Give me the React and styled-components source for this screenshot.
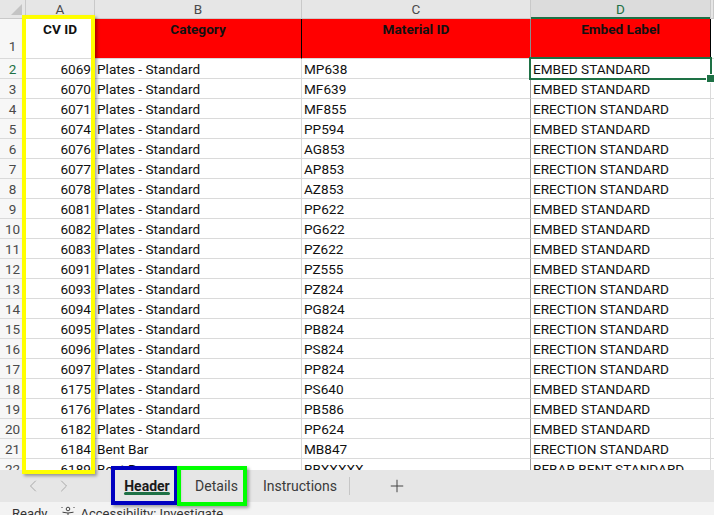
import React from 'react';
import styled, { createGlobalStyle, css } from 'styled-components';
import { ChevronLeft, ChevronRight, Plus } from 'lucide-react';

const GlobalStyle = createGlobalStyle`
  html, body { margin: 0; padding: 0; background: #ffffff; }
  body { font-family: Roboto, "Liberation Sans", Arial, sans-serif; }
  * { box-sizing: border-box; }
`;

const COLS = '26px 69px 207px 229px 180px 1fr';
const GRID = '#dadada';
const HEAD_LINE = '#c9c9c9';
const GREEN = '#1e7145';

const rows = [
  [6069, 'Plates - Standard', 'MP638', 'EMBED STANDARD'],
  [6070, 'Plates - Standard', 'MF639', 'EMBED STANDARD'],
  [6071, 'Plates - Standard', 'MF855', 'ERECTION STANDARD'],
  [6074, 'Plates - Standard', 'PP594', 'EMBED STANDARD'],
  [6076, 'Plates - Standard', 'AG853', 'ERECTION STANDARD'],
  [6077, 'Plates - Standard', 'AP853', 'ERECTION STANDARD'],
  [6078, 'Plates - Standard', 'AZ853', 'ERECTION STANDARD'],
  [6081, 'Plates - Standard', 'PP622', 'EMBED STANDARD'],
  [6082, 'Plates - Standard', 'PG622', 'EMBED STANDARD'],
  [6083, 'Plates - Standard', 'PZ622', 'EMBED STANDARD'],
  [6091, 'Plates - Standard', 'PZ555', 'EMBED STANDARD'],
  [6093, 'Plates - Standard', 'PZ824', 'ERECTION STANDARD'],
  [6094, 'Plates - Standard', 'PG824', 'ERECTION STANDARD'],
  [6095, 'Plates - Standard', 'PB824', 'ERECTION STANDARD'],
  [6096, 'Plates - Standard', 'PS824', 'ERECTION STANDARD'],
  [6097, 'Plates - Standard', 'PP824', 'ERECTION STANDARD'],
  [6175, 'Plates - Standard', 'PS640', 'EMBED STANDARD'],
  [6176, 'Plates - Standard', 'PB586', 'EMBED STANDARD'],
  [6182, 'Plates - Standard', 'PP624', 'EMBED STANDARD'],
  [6184, 'Bent Bar', 'MB847', 'ERECTION STANDARD'],
  [6189, 'Bent Bar', 'RBXXXXX', 'REBAR BENT STANDARD'],
];

const Page = styled.div`
  position: relative;
  width: 714px;
  height: 515px;
  overflow: hidden;
  display: flex;
  flex-direction: column;
  font-family: Roboto, "Liberation Sans", Arial, sans-serif;
`;

const Sheet = styled.div`
  flex: 0 0 470px;
  overflow: hidden;
  background: #ffffff;
`;

const GridRow = styled.div`
  display: grid;
  grid-template-columns: ${COLS};
  height: ${(p) => p.$h}px;
`;

const ColHead = styled.div`
  position: relative;
  display: flex;
  align-items: center;
  justify-content: center;
  background: ${(p) => (p.$active ? '#dcdcdc' : '#e6e6e6')};
  border-right: 1px solid ${HEAD_LINE};
  border-bottom: 1px solid ${HEAD_LINE};
  color: ${(p) => (p.$active ? GREEN : '#4a4a4a')};
  font-size: 13.5px;
  ${(p) =>
    p.$active &&
    css`
      &::after {
        content: '';
        position: absolute;
        left: 0;
        right: 0;
        bottom: -1px;
        height: 2px;
        background: ${GREEN};
      }
    `}
`;

const Corner = styled(ColHead)`
  justify-content: flex-end;
  align-items: flex-end;
  padding: 0 3px 3px 0;
`;

const RowHead = styled.div`
  display: flex;
  align-items: flex-end;
  justify-content: center;
  padding-bottom: ${(p) => (p.$tall ? 4 : 1)}px;
  background: #f7f7f7;
  border-right: 1px solid ${HEAD_LINE};
  border-bottom: 1px solid ${GRID};
  color: ${(p) => (p.$active ? GREEN : '#4a4a4a')};
  font-size: 13.5px;
`;

const Cell = styled.div`
  position: relative;
  display: flex;
  align-items: ${(p) => (p.$top ? 'flex-start' : 'flex-end')};
  justify-content: ${(p) =>
    p.$align === 'right' ? 'flex-end' : p.$align === 'center' ? 'center' : 'flex-start'};
  padding: ${(p) => (p.$top ? '2px 3px 0' : '0 3px 1px 2px')};
  background: ${(p) => p.$fill || '#ffffff'};
  border-right: 1px solid ${(p) => p.$edge || GRID};
  border-bottom: 1px solid ${GRID};
  color: #111111;
  font-size: 13.6px;
  font-weight: ${(p) => (p.$bold ? 700 : 400)};
  white-space: nowrap;
  overflow: visible;
  ${(p) =>
    p.$selected &&
    css`
      z-index: 2;
      &::after {
        content: '';
        position: absolute;
        top: -2px;
        left: -2px;
        right: -2px;
        bottom: -2px;
        border: 2px solid ${GREEN};
        pointer-events: none;
      }
      &::before {
        content: '';
        position: absolute;
        right: -5px;
        bottom: -5px;
        width: 7px;
        height: 7px;
        background: ${GREEN};
        border: 1px solid #ffffff;
        z-index: 3;
      }
    `}
`;

const TabBar = styled.div`
  flex: 0 0 32px;
  display: flex;
  align-items: stretch;
  background: #e6e6e6;
`;

const NavArea = styled.div`
  width: 112px;
  display: flex;
  padding-left: 17px;
`;

const NavButton = styled.div`
  width: 31px;
  display: flex;
  align-items: center;
  justify-content: center;
  color: #a9a9a9;
`;

const Tab = styled.div`
  position: relative;
  width: ${(p) => p.$w}px;
  display: flex;
  align-items: center;
  justify-content: center;
  font-size: 14px;
  color: ${(p) => (p.$active ? '#1a1a1a' : '#3a3a3a')};
  font-weight: ${(p) => (p.$active ? 700 : 400)};
  ${(p) =>
    p.$active &&
    css`
      &::after {
        content: '';
        position: absolute;
        left: 12px;
        right: 12px;
        top: 22px;
        height: 3px;
        border-radius: 2px;
        background: ${GREEN};
      }
    `}
`;

const TabDivider = styled.div`
  width: 1px;
  height: 18px;
  align-self: center;
  background: #c6c6c6;
`;

const AddButton = styled.div`
  width: 94px;
  display: flex;
  align-items: center;
  justify-content: center;
  color: #444444;
`;

const StatusBar = styled.div`
  flex: 1;
  display: flex;
  align-items: flex-start;
  gap: 13px;
  padding: 4px 0 0 12px;
  background: #f3f3f3;
  font-size: 13px;
  line-height: 16px;
  color: #333333;
`;

const StatusItem = styled.div`
  display: flex;
  align-items: flex-start;
  gap: 4px;
`;

const Annotation = styled.div`
  position: absolute;
  left: ${(p) => p.$x}px;
  top: ${(p) => p.$y}px;
  width: ${(p) => p.$w}px;
  height: ${(p) => p.$h}px;
  border: 4px solid ${(p) => p.$color};
  box-shadow: 2px 2px 3px rgba(0, 0, 0, 0.35);
  pointer-events: none;
  z-index: 10;
`;

const AccessIcon = () => (
  <svg width="16" height="14" viewBox="0 0 16 14" fill="none" stroke="#444" strokeWidth="1">
    <circle cx="8" cy="3" r="1.8" />
    <path d="M2.5 6.2 L8 7 L13.5 6.2" />
    <path d="M8 7 V10 M8 10 L5.5 14 M8 10 L10.5 14" />
    <path d="M1.5 1 L2.5 2 M14.5 1 L13.5 2" />
  </svg>
);

export default function App() {
  return (
    <>
      <GlobalStyle />
      <Page>
        <Sheet>
          <GridRow $h={19}>
            <Corner>
              <svg width="11" height="11" viewBox="0 0 11 11">
                <polygon points="11,0 11,11 0,11" fill="#c4c4c4" />
              </svg>
            </Corner>
            <ColHead>A</ColHead>
            <ColHead>B</ColHead>
            <ColHead>C</ColHead>
            <ColHead $active>D</ColHead>
            <ColHead />
          </GridRow>
          <GridRow $h={40}>
            <RowHead $tall>1</RowHead>
            <Cell $top $align="center" $bold>CV ID</Cell>
            <Cell $top $align="center" $bold $fill="#ff0000" $edge="#000000">Category</Cell>
            <Cell $top $align="center" $bold $fill="#ff0000" $edge="#8c8c8c">Material ID</Cell>
            <Cell $top $align="center" $bold $fill="#ff0000" $edge="#000000">Embed Label</Cell>
            <Cell />
          </GridRow>
          {rows.map(([id, cat, mat, label], i) => (
            <GridRow $h={20} key={id}>
              <RowHead $active={i === 0}>{i + 2}</RowHead>
              <Cell $align="right">{id}</Cell>
              <Cell>{cat}</Cell>
              <Cell $edge="#9a9a9a">{mat}</Cell>
              <Cell $selected={i === 0}>{label}</Cell>
              <Cell />
            </GridRow>
          ))}
        </Sheet>
        <TabBar>
          <NavArea>
            <NavButton>
              <ChevronLeft size={20} strokeWidth={1.2} />
            </NavButton>
            <NavButton>
              <ChevronRight size={20} strokeWidth={1.2} />
            </NavButton>
          </NavArea>
          <Tab $w={70} $active>Header</Tab>
          <Tab $w={69}>Details</Tab>
          <Tab $w={98}>Instructions</Tab>
          <TabDivider />
          <AddButton>
            <Plus size={20} strokeWidth={1.2} />
          </AddButton>
        </TabBar>
        <StatusBar>
          <StatusItem>Ready</StatusItem>
          <StatusItem>
            <AccessIcon />
            Accessibility: Investigate
          </StatusItem>
        </StatusBar>
        <Annotation $x={22} $y={15} $w={73} $h={459} $color="#ffff00" />
        <Annotation $x={111} $y={466} $w={67} $h={39} $color="#0000c0" />
        <Annotation $x={177} $y={466} $w={70} $h={40} $color="#00ff00" />
      </Page>
    </>
  );
}
